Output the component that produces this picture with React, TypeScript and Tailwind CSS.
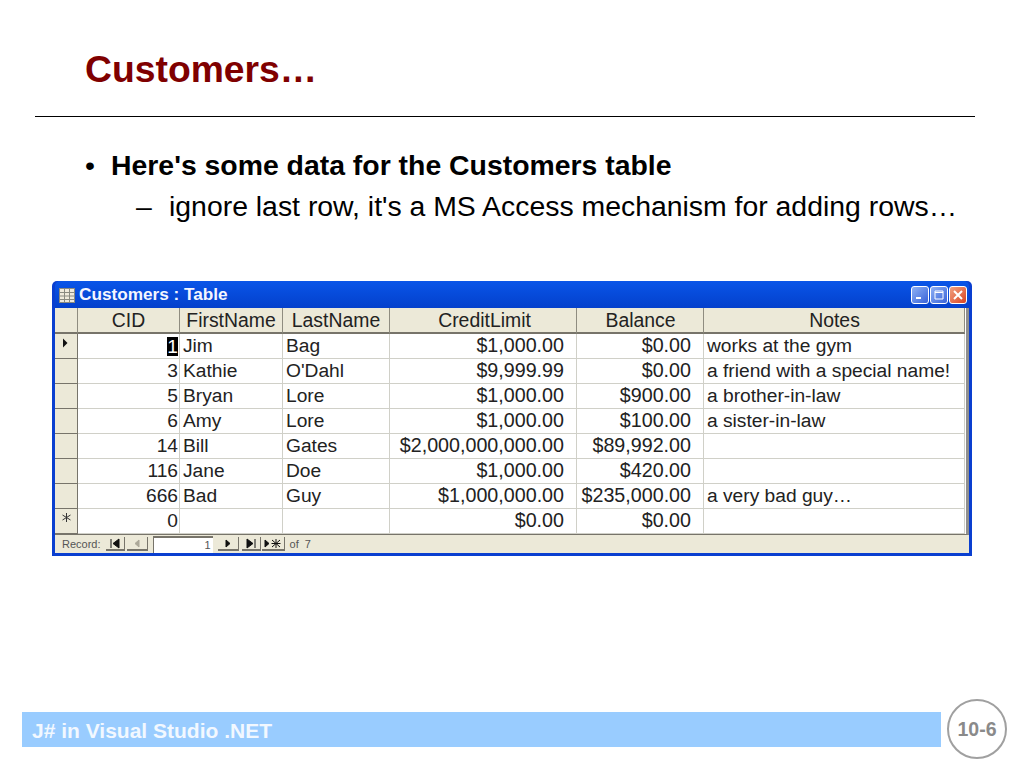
const cols = "grid grid-cols-[23px_102px_103px_107px_187px_127px_261px]";

const rows = [
  ["1", "Jim", "Bag", "$1,000.00", "$0.00", "works at the gym"],
  ["3", "Kathie", "O'Dahl", "$9,999.99", "$0.00", "a friend with a special name!"],
  ["5", "Bryan", "Lore", "$1,000.00", "$900.00", "a brother-in-law"],
  ["6", "Amy", "Lore", "$1,000.00", "$100.00", "a sister-in-law"],
  ["14", "Bill", "Gates", "$2,000,000,000.00", "$89,992.00", ""],
  ["116", "Jane", "Doe", "$1,000.00", "$420.00", ""],
  ["666", "Bad", "Guy", "$1,000,000.00", "$235,000.00", "a very bad guy…"],
  ["0", "", "", "$0.00", "$0.00", ""],
];

function Head({ children, className = "" }: { children?: string; className?: string }) {
  return (
    <div className={`flex h-[26px] items-center justify-center border-r border-b-2 border-r-[#8f8c80] border-b-[#77746a] bg-[#ece9d8] pt-[1px] text-[19.4px] leading-none text-[#222] ${className}`}>
      {children}
    </div>
  );
}

function Selector({ mark }: { mark?: "current" | "new" }) {
  return (
    <div className={`flex h-[25px] items-start justify-start border-r border-b border-[#77746a] bg-[#ece9d8] pl-[6px] ${mark === "new" ? "pt-[3px]" : "pt-[4px]"}`}>
      {mark === "current" && (
        <svg width="8" height="10" viewBox="0 0 8 10">
          <path d="M2 0.5 L6.5 5 L2 9.5 Z" fill="#111" />
        </svg>
      )}
      {mark === "new" && (
        <svg width="11" height="11" viewBox="0 0 11 11">
          <path d="M5.5 1 V10 M1.5 3 L9.5 8 M9.5 3 L1.5 8" stroke="#333" strokeWidth="1" fill="none" />
        </svg>
      )}
    </div>
  );
}

function Cell({ children, right, highlight }: { children?: string; right?: boolean; highlight?: boolean }) {
  return (
    <div
      className={`flex h-[25px] items-center border-r border-b border-[#d0d0c8] text-[19.2px] leading-none whitespace-nowrap text-[#222] ${
        right ? "justify-end pr-[1px]" : "pl-[3px]"
      }`}
    >
      {highlight ? <span className="bg-black leading-[19px] text-white">{children}</span> : children}
    </div>
  );
}

function CurrencyCell({ children }: { children?: string }) {
  return (
    <div className="flex h-[25px] items-center justify-end border-r border-b border-[#d0d0c8] pr-[12px] text-[19.7px] leading-none whitespace-nowrap text-[#222]">
      {children}
    </div>
  );
}

function NavButton({ d, dim, className, iconWidth = 12 }: { d: string; dim?: boolean; className: string; iconWidth?: number }) {
  return (
    <div className={`flex h-[14px] items-center justify-center border-r border-b-2 border-[#77746a] ${className}`}>
      <svg width={iconWidth} height="11" viewBox={`0 0 ${iconWidth} 11`}>
        <path d={d} fill={dim ? "#aca899" : "#111"} stroke={dim ? "#aca899" : "#111"} strokeWidth="1" />
      </svg>
    </div>
  );
}

function WinButton({ kind }: { kind: "min" | "max" | "close" }) {
  const bg =
    kind === "close"
      ? "bg-gradient-to-br from-[#f0a080] to-[#d8401c]"
      : "bg-gradient-to-br from-[#8fb0f4] to-[#3a62d8]";
  return (
    <div className={`flex h-[18px] w-[18px] items-center justify-center rounded-[3px] border border-white ${bg}`}>
      <svg width="12" height="12" viewBox="0 0 12 12">
        {kind === "min" && <rect x="2" y="8" width="5" height="2" fill="#fff" />}
        {kind === "max" && <path d="M2 2 H10 V10 H2 Z M2 3.5 H10" fill="none" stroke="#fff" strokeWidth="1" />}
        {kind === "close" && <path d="M2 2 L10 10 M10 2 L2 10" stroke="#fff" strokeWidth="2" />}
      </svg>
    </div>
  );
}

function AccessWindow() {
  return (
    <div className="ml-[52px] w-[920px] rounded-t-[5px] bg-[#0a3fd0] px-[3px] pb-[3px] [font-family:'Liberation_Sans',Arial,sans-serif]">
      <div className="flex h-[27px] items-center rounded-t-[5px] bg-gradient-to-b from-[#0a55e8] to-[#0440cc] pt-[1px] pr-[2px] pl-[4px]">
        <svg width="16" height="15" viewBox="0 0 16 15" className="shrink-0">
          <rect x="0.5" y="0.5" width="15" height="14" fill="#efeadb" stroke="#8a8a80" />
          <path d="M0 4.5 H16 M0 8 H16 M0 11.5 H16 M5.5 0 V15 M10.5 0 V15" stroke="#8a8a80" strokeWidth="1" />
        </svg>
        <span className="ml-[4px] text-[17.2px] leading-none font-bold text-[#f4f6ff]">Customers : Table</span>
        <div className="ml-auto flex gap-[1px]">
          <WinButton kind="min" />
          <WinButton kind="max" />
          <WinButton kind="close" />
        </div>
      </div>

      <div className="bg-white">
        <div className="h-[227px] border-r-[3px] border-b-[1px] border-r-[#8f8f8f] border-b-[#77746a] bg-white">
          <div className={cols}>
            <Head />
            <Head>CID</Head>
            <Head>FirstName</Head>
            <Head>LastName</Head>
            <Head className="pl-[3px]">CreditLimit</Head>
            <Head className="pl-[1px]">Balance</Head>
            <Head className="pl-[1px]">Notes</Head>
            {rows.map((r, i) => (
              <div key={i} className="contents">
                <Selector mark={i === 0 ? "current" : i === 7 ? "new" : undefined} />
                <Cell right highlight={i === 0}>{r[0]}</Cell>
                <Cell>{r[1]}</Cell>
                <Cell>{r[2]}</Cell>
                <CurrencyCell>{r[3]}</CurrencyCell>
                <CurrencyCell>{r[4]}</CurrencyCell>
                <Cell>{r[5]}</Cell>
              </div>
            ))}
          </div>
        </div>
        <div className="flex h-[18px] items-center bg-[#ece9d8] pl-[7px] text-[11px] leading-none text-[#555]">
          <span className="mr-[5px]">Record:</span>
          <NavButton className="w-[19px]" d="M2 1 V10 M10 1 L4 5.5 L10 10 Z" />
          <NavButton className="ml-[2px] w-[21px]" d="M8 2 L4 5.5 L8 9 Z" dim />
          <div className="ml-[5px] flex h-[17px] w-[60px] items-center justify-end border-t-2 border-l border-[#77746a] bg-white pr-[2px]">1</div>
          <NavButton className="ml-[5px] w-[21px]" d="M4 2 L8 5.5 L4 9 Z" />
          <NavButton className="ml-[3px] w-[19px]" d="M2 1 L8 5.5 L2 10 Z M10 1 V10" />
          <NavButton className="ml-[1px] w-[23px]" iconWidth={20} d="M2 2 L6 5.5 L2 9 Z M13 1 V10 M9 2 L17 9 M17 2 L9 9 M8.5 5.5 H17.5" />
          <span className="ml-[5px]">of&nbsp; 7</span>
        </div>
      </div>
    </div>
  );
}

export default function App() {
  return (
    <div className="flex h-[768px] w-[1024px] flex-col bg-white [font-family:'Liberation_Sans',Arial,sans-serif]">
      <h1 className="mt-[49px] ml-[85px] text-[37.3px] leading-[41px] font-bold text-[#7f0000]">Customers…</h1>
      <div className="mt-[26px] ml-[35px] h-px w-[940px] bg-black" />
      <div className="mt-[30px] ml-[85px] flex h-[36px] items-center text-[28.4px] font-bold text-black">
        <span className="w-[26px] font-normal">•</span>
        <span>Here's some data for the Customers table</span>
      </div>
      <div className="mt-[5px] ml-[136px] flex h-[36px] items-center text-[28.4px] text-black">
        <span className="w-[33px]">–</span>
        <span>ignore last row, it's a MS Access mechanism for adding rows…</span>
      </div>
      <div className="mt-[57px]">
        <AccessWindow />
      </div>
      <div className="mt-[143px] flex items-start">
        <div className="mt-[13px] ml-[22px] flex h-[35px] w-[919px] items-center bg-[#99ccff] pt-[2px] pl-[10px] text-[21px] font-bold text-[#f2f8ff]">
          J# in Visual Studio .NET
        </div>
        <div className="ml-[6px] flex h-[60px] w-[60px] items-center justify-center rounded-full border-2 border-[#a0a0a0] pt-[1px] text-[19.5px] font-bold text-[#8a8a8a]">
          10-6
        </div>
      </div>
    </div>
  );
}
